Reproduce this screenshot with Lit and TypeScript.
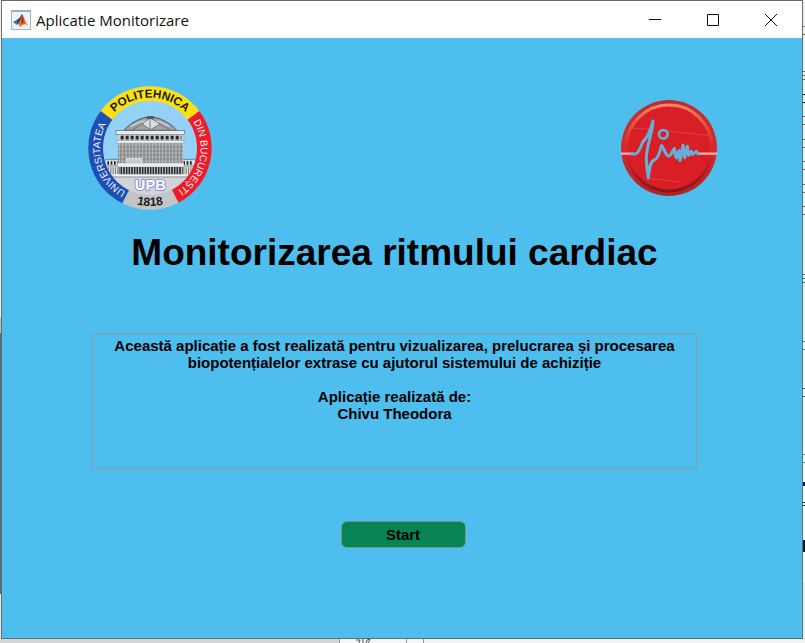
import { LitElement, html, svg, css } from "lit";
import { customElement, property } from "lit/decorators.js";

const range = (n: number) => Array.from({ length: n }, (_, i) => i);

@customElement("university-crest")
class UniversityCrest extends LitElement {
  static styles = css`
    :host { display: block; width: 124px; height: 124px; }
    svg { display: block; width: 100%; height: 100%; }
    text { font-family: "Liberation Sans", Arial, sans-serif; text-anchor: middle; }
    .top { font-size: 35px; font-weight: 700; fill: #1a1a10; }
    .left { font-size: 30px; fill: #f2f6ff; }
    .right { font-size: 30px; fill: #fff0f0; }
    .year { font-size: 36px; font-weight: 700; fill: #1c1c1c; }
    .upb { font-size: 44px; font-weight: 700; fill: #fff; stroke: #8088d0; stroke-width: 5; paint-order: stroke; }
  `;

  render() {
    return html`
      <svg viewBox="22 19 372 372" role="img" aria-label="Universitatea Politehnica din București">
        <defs>
          <clipPath id="inner"><circle cx="208" cy="205" r="141" /></clipPath>
          <path id="arc-top" d="M57 205A151 151 0 0 1 359 205" />
          <path id="arc-left" d="M208 355A150 150 0 0 1 208 55" />
          <path id="arc-right" d="M208 53A152 152 0 0 1 208 357" />
          <path id="arc-bottom" d="M34 205A174 174 0 0 0 382 205" />
        </defs>
        <circle cx="208" cy="205" r="185" fill="#c4c4c6" />
        <path d="M208 205L60 94A185 185 0 0 1 356 94Z" fill="#fbe112" />
        <path d="M208 205L60 94A185 185 0 0 0 125 371Z" fill="#1d4fb4" />
        <path d="M208 205L356 94A185 185 0 0 1 294 369Z" fill="#ec1c2b" />
        <circle cx="208" cy="205" r="141" fill="#93d2f6" />
        <g clip-path="url(#inner)">
          <rect x="60" y="291" width="300" height="60" fill="#d2d3d6" />
          <rect x="76" y="242" width="266" height="49" fill="#dfe1e3" />
          <path d="M76 239H342M76 259H342" stroke="#5c6064" stroke-width="2" />
          <path d="M80 250H112M308 250H338" stroke="#222" stroke-width="10" stroke-dasharray="5 5" />
          <path d="M82 273H112M308 273H338" stroke="#777" stroke-width="20" stroke-dasharray="3 4" />
          <path d="M130 152C150 128 184 112 208 112C234 112 268 128 288 152Z" fill="#9da3a8" stroke="#4e5458" stroke-width="3" />
          <path d="M150 140Q208 104 266 140" fill="none" stroke="#e5e8ea" stroke-width="3" />
          <path d="M208 115L184 133L210 150L238 133ZM184 133L154 151M238 133L268 151M208 115V150" fill="#d8dde0" stroke="#555b60" stroke-width="2" />
          <rect x="198" y="110" width="22" height="7" rx="3" fill="#4a4f54" />
          <rect x="106" y="153" width="206" height="11" fill="#e9ebec" stroke="#60666a" stroke-width="2" />
          <rect x="112" y="165" width="194" height="18" fill="#c6cacd" />
          <path d="M120 174H302" stroke="#222629" stroke-width="11" stroke-dasharray="9 6" />
          <rect x="108" y="183" width="202" height="7" fill="#f0f1f2" stroke="#6d7377" stroke-width="1" />
          <rect x="112" y="190" width="195" height="60" fill="#96999c" />
          ${range(20).map((i) => svg`<path d="M${116 + i * 10} 190V250" stroke="#c3c6c9" stroke-width="3" />`)}
          <path d="M112 202H307M112 214H307M112 226H307M112 238H307" stroke="#74797d" stroke-width="2" />
          <rect x="138" y="236" width="45" height="14" fill="#c8cbcd" stroke="#f1f1f1" stroke-width="2" />
          <rect x="110" y="250" width="200" height="12" fill="#eeeff0" stroke="#777" stroke-width="1" />
          <rect x="114" y="262" width="192" height="22" fill="#24282b" />
          ${range(24).map((i) => svg`<path d="M${118 + i * 8} 262V284" stroke="#d4d6d8" stroke-width="3" />`)}
          <path d="M104 287H315" stroke="#f4f4f4" stroke-width="5" />
          <path d="M82 292H336" stroke="#777" stroke-width="2" />
        </g>
        <text class="upb" x="209" y="330">UPB</text>
        <text class="top"><textPath href="#arc-top" startOffset="50%">POLITEHNICA</textPath></text>
        <text class="left"><textPath href="#arc-left" startOffset="41%">UNIVERSITATEA</textPath></text>
        <text class="right"><textPath href="#arc-right" startOffset="57%">DIN BUCUREȘTI</textPath></text>
        <text class="year"><textPath href="#arc-bottom" startOffset="50%">1818</textPath></text>
      </svg>
    `;
  }
}

@customElement("pulse-badge")
class PulseBadge extends LitElement {
  static styles = css`
    :host { display: block; width: 98px; height: 98px; }
    svg { display: block; width: 100%; height: 100%; }
  `;

  render() {
    return html`
      <svg viewBox="30 26 294 294" role="img" aria-label="FIM">
        <defs>
          <linearGradient id="rim" x1="0" y1="0" x2="0" y2="1">
            <stop offset="0" stop-color="#b8302c" />
            <stop offset="0.5" stop-color="#d92a2a" />
            <stop offset="1" stop-color="#b02226" />
          </linearGradient>
          <linearGradient id="shine" x1="0" y1="0" x2="0" y2="1">
            <stop offset="0" stop-color="#f4846a" />
            <stop offset="0.35" stop-color="#e23a34" />
            <stop offset="0.65" stop-color="#c82027" />
            <stop offset="1" stop-color="#84161a" />
          </linearGradient>
        </defs>
        <circle cx="177" cy="173" r="144" fill="url(#rim)" />
        <circle cx="177" cy="173" r="129" fill="#d81f25" stroke="url(#shine)" stroke-width="9" />
        <path d="M66 113L122 117M160 121L296 135M110 264L210 274" stroke="#e6504a" stroke-width="2" fill="none" />
        <path d="M32 190H70M262 190H322" stroke="#f3b4ae" stroke-width="7" />
        <path d="M64 191H76C88 188 92 166 100 153C112 142 122 118 129 92C127 134 108 168 109 206C110 230 112 248 115 263C117 238 119 214 133 209C147 204 149 181 155 166C162 172 166 196 176 197C185 197 187 179 193 174C196 180 193 201 200 203C204 193 202 184 207 181L210 211C215 190 217 175 219 164L224 202L232 168L236 195L244 183L248 192L259 183L265 191" fill="none" stroke="#65afd9" stroke-width="9" stroke-linecap="round" stroke-linejoin="round" />
        <circle cx="160" cy="132" r="13" fill="none" stroke="#65afd9" stroke-width="8" />
      </svg>
    `;
  }
}

@customElement("title-bar")
class TitleBar extends LitElement {
  @property() heading = "";

  static styles = css`
    :host { display: flex; align-items: center; height: 37px; background: #fff; padding: 0 2px 0 9px; }
    .app-icon { width: 20px; height: 20px; flex: none; }
    .name { flex: 1; margin-left: 5px; font: 15px/20px "Open Sans", "Noto Sans", sans-serif; color: #111; white-space: nowrap; }
    button { width: 58px; height: 100%; padding: 0; border: 0; background: none; display: grid; place-items: center; }
    button svg { width: 14px; height: 14px; fill: none; stroke: #111; }
    .controls { display: flex; height: 100%; }
  `;

  render() {
    return html`
      <svg class="app-icon" viewBox="0 0 20 20" aria-hidden="true">
        <rect x="0.5" y="0.5" width="19" height="19" fill="#eef3f7" stroke="#a7b3be" />
        <path d="M0 0H20V2H0Z" fill="#8db4d0" />
        <path d="M2 12L7 9L10 12L6 15Z" fill="#3f79ae" />
        <path d="M7 9C9 8 10 5 11 4L12 8L8 14L6 13Z" fill="#26406b" />
        <path d="M11 4C13 7 15 13 17 16C14 13 12 14 9 17L7 13C9 12 10 8 11 4Z" fill="#e8712a" />
        <path d="M11 4C13 8 13 12 12 14L10 12C11 10 11 7 11 4Z" fill="#9e2e1e" />
      </svg>
      <span class="name">${this.heading}</span>
      <div class="controls">
        <button aria-label="Minimize"><svg viewBox="0 0 14 14"><path d="M1 6.5H13" /></svg></button>
        <button aria-label="Maximize"><svg viewBox="0 0 14 14"><path d="M1.5 1.5H12.5V12.5H1.5Z" /></svg></button>
        <button aria-label="Close"><svg viewBox="0 0 14 14"><path d="M1 1L13 13M13 1L1 13" /></svg></button>
      </div>
    `;
  }
}

/* y, height and colour of the marks of the window underneath */
const marks: [number, number, string][] = [
  [26, 1, "#5b8a5b"], [34, 1, "#a0522d"], [71, 1, "#a8572f"], [75, 1, "#a8572f"], [79, 1, "#a8572f"],
  [94, 1, "#111"], [102, 1, "#111"], [116, 1, "#a8572f"], [124, 1, "#a8572f"], [139, 1, "#93682c"],
  [147, 1, "#93682c"], [161, 1, "#a8572f"], [169, 1, "#a8572f"], [184, 1, "#7b6a2c"], [192, 1, "#93682c"],
  [206, 1, "#a8572f"], [214, 1, "#a8572f"], [274, 1, "#2f7a3a"], [278, 1, "#2f7a3a"], [282, 1, "#2f7a3a"],
  [341, 1, "#4a8a4a"], [349, 1, "#4a8a4a"], [388, 1, "#8a2fc0"], [396, 1, "#8a2fc0"], [454, 1, "#5a9a6a"],
  [462, 1, "#5a9a6a"], [482, 4, "#14204a"], [502, 1, "#111"], [505, 1, "#111"], [540, 12, "#16182c"],
];

@customElement("app-root")
class AppRoot extends LitElement {
  static styles = css`
    :host {
      display: grid;
      grid-template: 1fr 4px / 1px 1fr 2px;
      min-height: 100vh;
      box-sizing: border-box;
      font-family: "Liberation Sans", Arial, sans-serif;
      color: #000;
    }
    .under-left { background: linear-gradient(#f0f0f0 318px, #b9bec2 318px 333px, #41728c 333px 594px, #e8e8e8 594px); }
    .under-right { display: block; width: 2px; height: 100%; background: linear-gradient(#f0f0f0 340px, #fff 340px 582px, #ececec 582px); }
    .under-bottom { grid-column: 1 / -1; display: flex; background: #f2f2f2; overflow: hidden; }
    .cell { border-right: 1px solid #999; background: #f6f6f6; }
    .cell.first { width: 339px; background: #d6d6d6; }
    .cell.second { width: 66px; }
    .cell.third { width: 16px; }
    .cell svg { display: block; width: 18px; height: 4px; margin-left: 15px; }
    .window { display: flex; flex-direction: column; border: 1px solid #6b6b6b; background: #4dbeee; min-width: 0; }
    main { display: flex; flex-direction: column; padding: 48px 84px 40px 86px; }
    .logos { display: flex; justify-content: space-between; align-items: center; }
    h1 { margin: 21px 21px 0 4px; font-size: 37px; line-height: 44px; font-weight: 700; text-align: center; }
    .about {
      margin: 58px 21px 0 4px;
      box-sizing: border-box;
      min-height: 136px;
      padding: 3px 8px;
      border: 1px solid #8a9ba3;
      font-size: 15px;
      line-height: 17px;
      font-weight: 700;
      text-align: center;
    }
    p { margin: 0 0 17px; }
    .start {
      align-self: center;
      margin-top: 52px;
      width: 125px;
      height: 27px;
      padding: 0;
      border: 1px solid #74988a;
      border-radius: 6px;
      background: #078454;
      color: #000;
      font: 700 15px/17px "Liberation Sans", Arial, sans-serif;
    }
  `;

  render() {
    return html`
      <div class="under-left"></div>
      <section class="window">
        <title-bar heading="Aplicatie Monitorizare"></title-bar>
        <main>
          <div class="logos">
            <university-crest></university-crest>
            <pulse-badge></pulse-badge>
          </div>
          <h1>Monitorizarea ritmului cardiac</h1>
          <div class="about">
            <p>Această aplicație a fost realizată pentru vizualizarea, prelucrarea și procesarea biopotențialelor extrase cu ajutorul sistemului de achiziție</p>
            <p>Aplicație realizată de:<br />Chivu Theodora</p>
          </div>
          <button class="start">Start</button>
        </main>
      </section>
      <svg class="under-right" aria-hidden="true">
        ${marks.map(([y, h, c]) => svg`<rect x="0" y=${y} width="2" height=${h} fill=${c} />`)}
      </svg>
      <div class="under-bottom">
        <div class="cell first"></div>
        <div class="cell second">
          <svg viewBox="0 0 18 4" aria-hidden="true"><path d="M1 1H5L4 4M8 0V4M11 4L12 1L15 0L13 4" fill="none" stroke="#555" /></svg>
        </div>
        <div class="cell third"></div>
      </div>
    `;
  }
}
